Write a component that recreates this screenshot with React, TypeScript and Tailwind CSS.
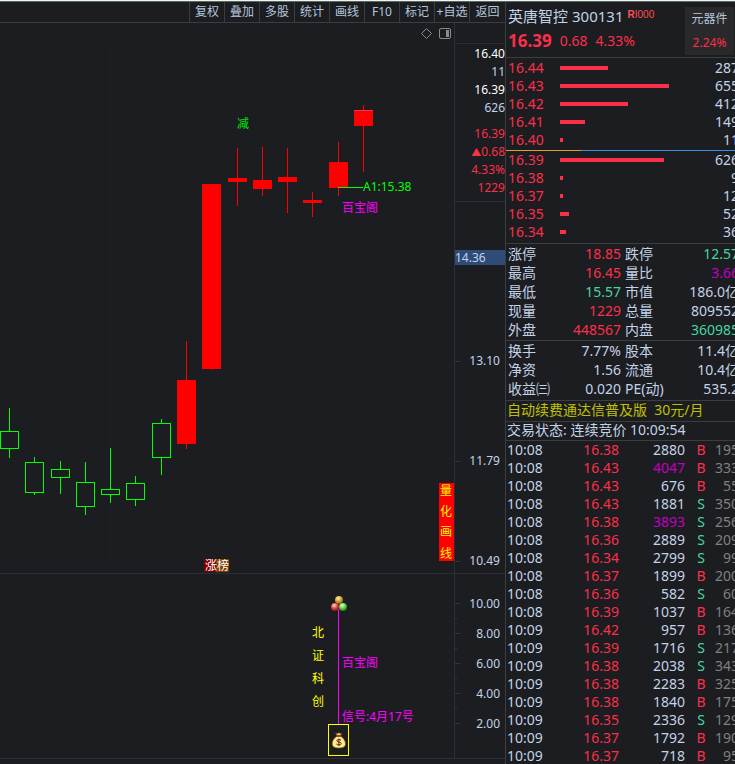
import { useState } from 'react';

const TOOLS = ['复权', '叠加', '多股', '统计', '画线', 'F10', '标记', '+自选', '返回'];

// x = left edge of the body, the wick runs from high to low
const CANDLES = [
    { x: 0, top: 431, bottom: 449, high: 408, low: 458, up: false },
    { x: 25, top: 462, bottom: 493, high: 457, low: 495, up: false },
    { x: 51, top: 469, bottom: 478, high: 461, low: 494, up: false },
    { x: 76, top: 482, bottom: 507, high: 462, low: 515, up: false },
    { x: 101, top: 489, bottom: 495, high: 448, low: 503, up: false },
    { x: 126, top: 483, bottom: 500, high: 476, low: 506, up: false },
    { x: 152, top: 423, bottom: 458, high: 419, low: 475, up: false },
    { x: 177, top: 380, bottom: 444, high: 341, low: 449, up: true },
    { x: 202, top: 184, bottom: 369, high: 184, low: 370, up: true },
    { x: 228, top: 178, bottom: 182, high: 148, low: 206, up: true },
    { x: 253, top: 180, bottom: 189, high: 147, low: 196, up: true },
    { x: 278, top: 177, bottom: 182, high: 148, low: 213, up: true },
    { x: 303, top: 200, bottom: 203, high: 192, low: 217, up: true },
    { x: 329, top: 162, bottom: 188, high: 142, low: 196, up: true },
    { x: 354, top: 110, bottom: 126, high: 105, low: 172, up: true },
];

const ASKS = [
    { price: '16.44', bar: 48, volume: '287' },
    { price: '16.43', bar: 109, volume: '655' },
    { price: '16.42', bar: 68, volume: '412' },
    { price: '16.41', bar: 25, volume: '149' },
    { price: '16.40', bar: 3, volume: '11' },
];

const BIDS = [
    { price: '16.39', bar: 104, volume: '626' },
    { price: '16.38', bar: 3, volume: '9' },
    { price: '16.37', bar: 3, volume: '12' },
    { price: '16.35', bar: 9, volume: '52' },
    { price: '16.34', bar: 6, volume: '36' },
];

const RED = 'text-[#fb2f49]';
const GREEN = 'text-[#45d6a0]';
const PURPLE = 'text-[#c000c0]';
const PLAIN = 'text-[#c3d3e6]';

const STATS_TOP = [
    ['涨停', '18.85', RED, '跌停', '12.57', GREEN],
    ['最高', '16.45', RED, '量比', '3.66', PURPLE],
    ['最低', '15.57', GREEN, '市值', '186.0亿', PLAIN],
    ['现量', '1229', RED, '总量', '809552', PLAIN],
    ['外盘', '448567', RED, '内盘', '360985', GREEN],
];

const STATS_BOTTOM = [
    ['换手', '7.77%', PLAIN, '股本', '11.4亿', PLAIN],
    ['净资', '1.56', PLAIN, '流通', '10.4亿', PLAIN],
    ['收益㈢', '0.020', PLAIN, 'PE(动)', '535.2', PLAIN],
];

const TRADES = [
    ['10:08', '16.38', '2880', 'B', '195'],
    ['10:08', '16.43', '4047', 'B', '333'],
    ['10:08', '16.43', '676', 'B', '55'],
    ['10:08', '16.43', '1881', 'S', '350'],
    ['10:08', '16.38', '3893', 'S', '256'],
    ['10:08', '16.36', '2889', 'S', '209'],
    ['10:08', '16.34', '2799', 'S', '99'],
    ['10:08', '16.37', '1899', 'B', '200'],
    ['10:08', '16.36', '582', 'S', '60'],
    ['10:08', '16.39', '1037', 'B', '164'],
    ['10:09', '16.42', '957', 'B', '136'],
    ['10:09', '16.39', '1716', 'S', '217'],
    ['10:09', '16.38', '2038', 'S', '343'],
    ['10:09', '16.38', '2283', 'B', '325'],
    ['10:09', '16.38', '1840', 'B', '175'],
    ['10:09', '16.35', '2336', 'S', '129'],
    ['10:09', '16.37', '1792', 'B', '190'],
    ['10:09', '16.37', '718', 'B', '95'],
];

function Toolbar() {
    return (
        <nav className="flex justify-end h-[21px] border-b border-[#3c3d40]">
            {TOOLS.map((tool) => (
                <button
                    key={tool}
                    type="button"
                    className="w-[35px] last:w-9 shrink-0 border-l border-[#3c3d40] text-xs leading-5 whitespace-nowrap text-[#b4c6dc] hover:bg-[#2a2b2f]"
                >
                    {tool}
                </button>
            ))}
        </nav>
    );
}

function CandleChart() {
    return (
        <svg viewBox="0 23 454 550" className="block w-full h-auto text-xs" role="img" aria-label="K线图">
            <line x1="110.5" y1="45" x2="110.5" y2="560" stroke="#2e2f34" strokeDasharray="1 3" />
            {CANDLES.map((c) => (
                <g key={c.x} fill={c.up ? '#ff0000' : '#00ff00'}>
                    <rect x={c.x + 9} y={c.high} width="1" height={c.low - c.high} />
                    {c.up ? (
                        <rect x={c.x} y={c.top} width="19" height={c.bottom - c.top} />
                    ) : (
                        <rect
                            x={c.x + 0.5}
                            y={c.top + 0.5}
                            width="18"
                            height={c.bottom - c.top - 1}
                            fill="#1c1d21"
                            stroke="#00ff00"
                        />
                    )}
                </g>
            ))}
            <rect x="354" y="110" width="19" height="1" fill="#fb2f49" />

            {/* Signals */}
            <text x="237" y="128" fill="#00e600">减</text>
            <rect x="338" y="187" width="25" height="1" fill="#00ff00" />
            <text x="363" y="191" fill="#00ff00">A1:15.38</text>
            <text x="342" y="212" fill="#ff00ff">百宝阁</text>

            {/* Rank badge */}
            <rect x="204" y="559" width="12" height="13" fill="#800000" />
            <rect x="216" y="559" width="13" height="13" fill="#804000" />
            <text x="205" y="570" fill="#ffffff">涨榜</text>

            <rect x="439" y="483" width="15" height="78" fill="#ff0000" />
            <g fill="#ffff00">
                <text x="440" y="495">量</text>
                <text x="440" y="516">化</text>
                <text x="440" y="536">画</text>
                <text x="440" y="558">线</text>
            </g>
        </svg>
    );
}

function SignalChart() {
    return (
        <svg viewBox="0 574 454 184" className="block w-full h-auto text-xs" role="img" aria-label="信号">
            <defs>
                <radialGradient id="gold" cx="0.4" cy="0.3" r="0.7">
                    <stop offset="0" stopColor="#fff3b0" />
                    <stop offset="0.5" stopColor="#d8a840" />
                    <stop offset="1" stopColor="#8a5a10" />
                </radialGradient>
                <radialGradient id="ruby" cx="0.4" cy="0.3" r="0.7">
                    <stop offset="0" stopColor="#ffd8d0" />
                    <stop offset="0.5" stopColor="#e05048" />
                    <stop offset="1" stopColor="#901818" />
                </radialGradient>
                <radialGradient id="jade" cx="0.4" cy="0.3" r="0.7">
                    <stop offset="0" stopColor="#e8ffe0" />
                    <stop offset="0.5" stopColor="#68d848" />
                    <stop offset="1" stopColor="#1c8018" />
                </radialGradient>
            </defs>

            <rect x="338" y="609" width="1" height="115" fill="#ff00ff" />
            <circle cx="339" cy="600" r="4" fill="url(#gold)" />
            <circle cx="335" cy="607" r="4" fill="url(#ruby)" />
            <circle cx="343" cy="607" r="4" fill="url(#jade)" />

            <g fill="#ffff00">
                <text x="312" y="637">北</text>
                <text x="312" y="660">证</text>
                <text x="312" y="683">科</text>
                <text x="312" y="706">创</text>
            </g>
            <text x="342" y="667" fill="#ff00ff">百宝阁</text>
            <text x="342" y="721" fill="#ff00ff">信号:4月17号</text>

            {/* Money bag */}
            <rect x="328.5" y="724.5" width="20" height="31" fill="none" stroke="#ffff00" />
            <path d="M335.5 733 L337 735.5 H340.5 L342 733 L340 733.6 L338.8 732.6 L337.5 733.6 Z" fill="#f5d060" stroke="#5a3a10" strokeWidth="0.6" />
            <path
                d="M336.5 736.5 C334 738 332 741 332.2 744 C332.4 747 335 748 338.8 748 C342.6 748 345.3 747 345.5 744 C345.6 741 343.5 738 341 736.5 Z"
                fill="#ffe98a"
                stroke="#7a5018"
                strokeWidth="0.6"
            />
            <path d="M336 736 H341.5" stroke="#a04020" strokeWidth="1.4" />
            <path
                d="M341 740.2 C340 739.2 336.8 739.2 336.8 740.8 C336.8 742.6 341.2 741.4 341.2 743.6 C341.2 745.4 337.6 745.2 336.4 744 M338.9 738.6 V746"
                fill="none"
                stroke="#5a2810"
                strokeWidth="1"
            />
        </svg>
    );
}

function Tick({ label, className = '' }: { label?: string; className?: string }) {
    return (
        <div className={`flex items-center justify-between pr-[5px] ${className}`}>
            <span className={label ? 'h-px w-[5px] bg-[#33343a]' : 'h-px w-[2px] bg-[#33343a]'} />
            {label}
        </div>
    );
}

function PriceAxis() {
    return (
        <aside className="w-[51px] shrink-0 border-l border-[#2c2d35] text-xs text-[#c3d3e6]">
            <div className="h-[21px] border-b border-[#2c2d35]" />
            <div className="pt-px pb-1 border-b border-[#2c2d35] text-right leading-[18px]">
                <p className="text-white">16.40</p>
                <p>11</p>
                <p className="text-white">16.39</p>
                <p>626</p>
                <div className="mt-2 text-[#fb2f49]">
                    <p>16.39</p>
                    <p>
                        <span className="text-[10px]">▲</span>0.68
                    </p>
                    <p>4.33%</p>
                    <p>1229</p>
                </div>
            </div>
            <div className="mt-12 h-[15px] bg-[#2f4b78] leading-[15px]">14.36</div>
            <div className="mt-[86px] flex flex-col gap-20 leading-5">
                <Tick label="13.10" />
                <Tick label="11.79" />
                <Tick label="10.49" />
            </div>
        </aside>
    );
}

function SignalAxis() {
    return (
        <aside className="w-[51px] shrink-0 border-l border-[#2c2d35] pt-[22px] text-xs leading-[15px] text-[#c3d3e6]">
            {['10.00', '8.00', '6.00', '4.00', '2.00'].map((label, i) => (
                <div key={label}>
                    {i > 0 && <Tick className="h-[15px]" />}
                    <Tick label={label} className="h-[15px]" />
                </div>
            ))}
        </aside>
    );
}

function ChartControls() {
    const [panel, setPanel] = useState(true);

    return (
        <div className="absolute top-1 right-[3px] flex items-center gap-[6px] text-[#8a8b8e]">
            <button type="button" aria-label="标记点">
                <svg width="13" height="13" viewBox="0 0 13 13" fill="none" stroke="currentColor">
                    <path d="M6.5 1.5 L11.5 6.5 L6.5 11.5 L1.5 6.5 Z" />
                </svg>
            </button>
            <button type="button" aria-label="侧栏" aria-pressed={panel} onClick={() => setPanel(!panel)}>
                <svg width="12" height="12" viewBox="0 0 12 12" fill="none" stroke="currentColor">
                    <rect x="0.5" y="0.5" width="11" height="10" rx="1.5" />
                    {panel && <rect x="7" y="2" width="3" height="7" fill="currentColor" stroke="none" />}
                </svg>
            </button>
        </div>
    );
}

function QuoteHeader() {
    return (
        <header className="flex justify-between h-14 border-b border-[#3c3d40]">
            <div className="pl-[2px] pt-[3px] whitespace-nowrap">
                <h1 className="flex text-[15px] leading-[22px] text-[#c3d3e6]">
                    英唐智控
                    <span className="ml-1">300131</span>
                    <span className="ml-1 font-['Liberation_Sans_Narrow','Liberation_Sans',sans-serif] text-[10px] leading-5 text-[#ff5050]">
                        <b>R</b>I000
                    </span>
                </h1>
                <p className="mt-[2px] flex items-center gap-2 text-sm leading-6 text-[#fb2f49]">
                    <strong className="text-[17px]">16.39</strong>
                    <span>0.68</span>
                    <span>4.33%</span>
                </p>
            </div>
            <a href="#sector" className="mt-[5px] mr-px h-12 w-[49px] bg-[#29292b] text-center text-xs leading-6 text-[#b4c6dc]">
                元器件
                <span className="block text-[#fb2f49]">2.24%</span>
            </a>
        </header>
    );
}

function Book({ rows, label }: { rows: typeof ASKS; label: string }) {
    return (
        <table aria-label={label} className="w-full table-fixed leading-[18px]">
            <tbody>
                {rows.map((row) => (
                    <tr key={row.price} className="h-[18px]">
                        <td className="w-[54px] p-0 pl-[2px] text-[#fb2f49]">{row.price}</td>
                        <td className="p-0">
                            <div className="h-1 bg-[#fb2f49]" style={{ width: row.bar }} />
                        </td>
                        <td className="w-10 p-0 text-right text-[#c3d3e6]">{row.volume}</td>
                    </tr>
                ))}
            </tbody>
        </table>
    );
}

function Stats({ rows }: { rows: string[][] }) {
    return (
        <table className="w-full table-fixed leading-[19px] whitespace-nowrap">
            <tbody>
                {rows.map(([name, value, color, name2, value2, color2]) => (
                    <tr key={name} className="h-[19px]">
                        <th scope="row" className="w-[52px] p-0 pl-[2px] text-left font-normal">{name}</th>
                        <td className={`w-[63px] p-0 text-right ${color}`}>{value}</td>
                        <th scope="row" className="w-12 p-0 pl-1 text-left font-normal">{name2}</th>
                        <td className={`p-0 text-right ${color2}`}>{value2}</td>
                    </tr>
                ))}
            </tbody>
        </table>
    );
}

function Trades() {
    return (
        <table aria-label="成交明细" className="w-full table-fixed leading-[18px]">
            <tbody>
                {TRADES.map(([time, price, volume, side, count], i) => (
                    <tr key={i} className="h-[18px]">
                        <td className="w-[52px] p-0 pl-px">{time}</td>
                        <td className="w-[61px] p-0 text-right text-[#fb2f49]">{price}</td>
                        <td className={`w-[66px] p-0 text-right ${Number(volume) > 3000 ? PURPLE : PLAIN}`}>{volume}</td>
                        <td className={`w-7 p-0 pl-1 text-center ${side === 'B' ? RED : GREEN}`}>{side}</td>
                        <td className="p-0 text-right text-[#808080]">{count}</td>
                    </tr>
                ))}
            </tbody>
        </table>
    );
}

export default function App() {
    return (
        <div className="overflow-hidden bg-[#1c1d21] font-['Noto_Sans','Noto_Sans_CJK_SC',sans-serif]">
            <div className="h-[2px] border-b border-[#5c6a64] bg-[#eef4f1]" />
            <div className="flex">
                <main className="min-w-0 flex-1">
                    <Toolbar />
                    <section className="flex border-b border-[#2c2d35]">
                        <div className="relative min-w-0 flex-1">
                            <CandleChart />
                            <ChartControls />
                        </div>
                        <PriceAxis />
                    </section>
                    <section className="flex border-b border-[#2c2d35]">
                        <div className="min-w-0 flex-1">
                            <SignalChart />
                        </div>
                        <SignalAxis />
                    </section>
                </main>

                {/* Quote panel, the last column runs past the window edge */}
                <div className="w-[230px] shrink-0 overflow-hidden border-l border-[#3c3d40] text-sm text-[#c3d3e6]">
                    <QuoteHeader />
                    <div className="-mr-1">
                        <div className="py-px">
                            <Book rows={ASKS} label="卖盘" />
                        </div>
                        <div className="flex h-px bg-[#3a8fe0]">
                            <div className="w-[75px] bg-[#e0a030]" />
                        </div>
                        <div className="pb-[2px] border-b border-[#3c3d40]">
                            <Book rows={BIDS} label="买盘" />
                        </div>
                        <div className="pb-px border-b border-[#3c3d40]">
                            <Stats rows={STATS_TOP} />
                        </div>
                        <div className="pb-[2px] border-b border-[#3c3d40]">
                            <Stats rows={STATS_BOTTOM} />
                        </div>
                        <a href="#renew" className="block pl-px pb-[2px] border-b border-[#3c3d40] leading-[18px] whitespace-pre text-[#c0c000]">
                            自动续费通达信普及版  30元/月
                        </a>
                        <p className="pl-px pb-[2px] border-b border-[#3c3d40] leading-4">交易状态: 连续竞价 10:09:54</p>
                        <Trades />
                    </div>
                </div>
            </div>
        </div>
    );
}
